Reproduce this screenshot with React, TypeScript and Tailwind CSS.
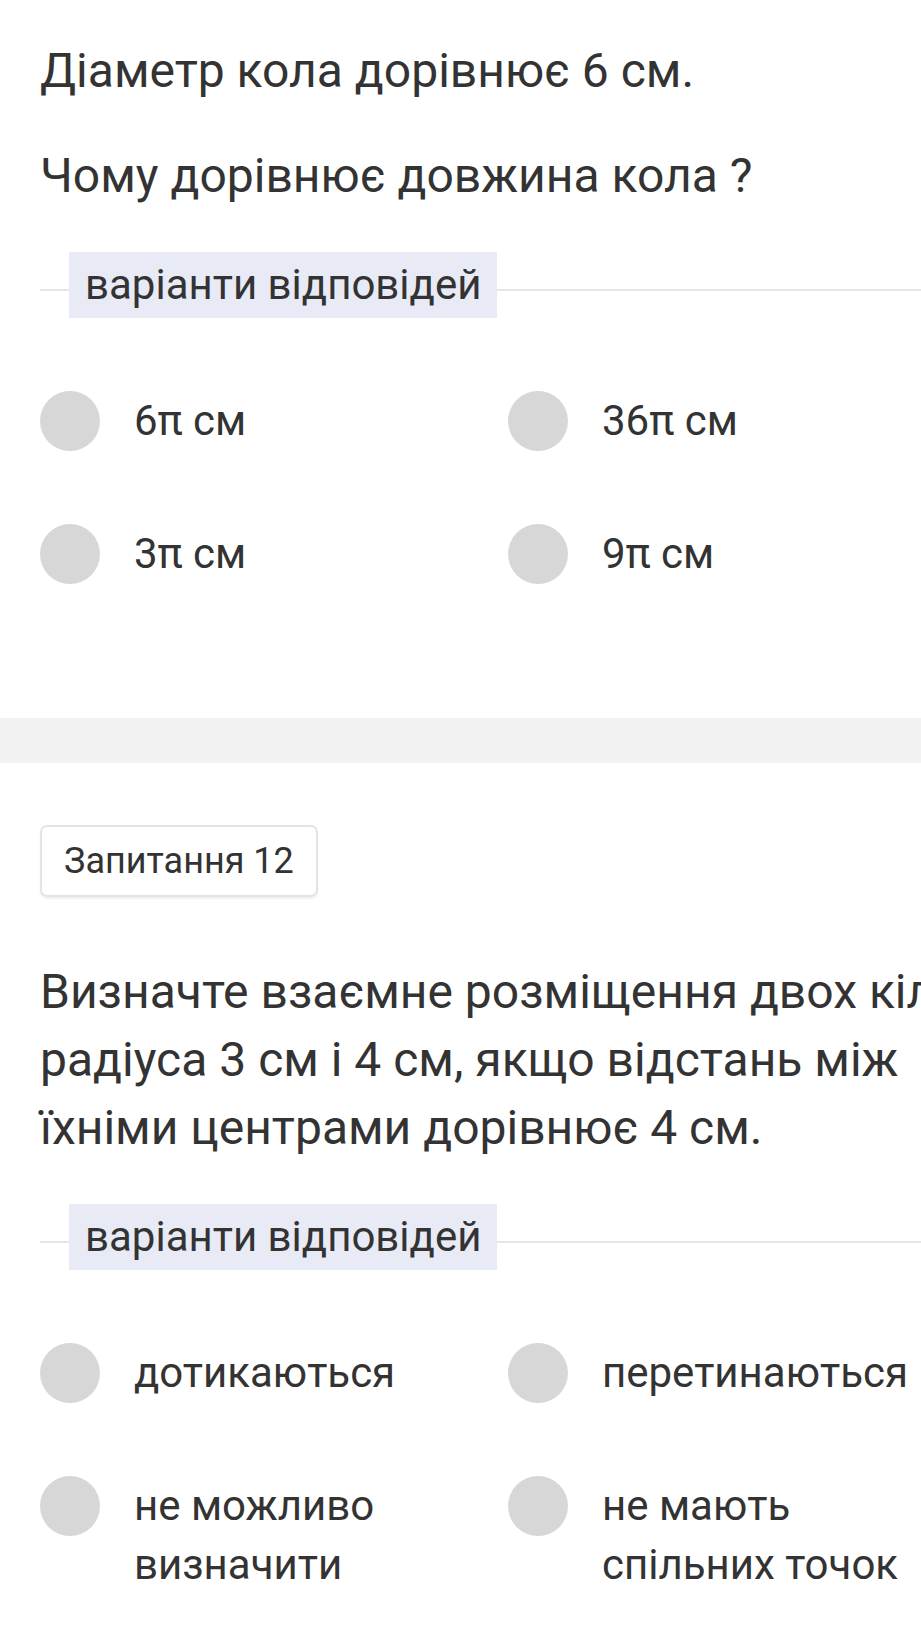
import React from 'react';

type Option = { id: string; text: string };

const Radio: React.FC<{ option: Option }> = ({ option }) => (
    <div className="flex items-start gap-[34px]">
        <div className="w-[60px] h-[60px] shrink-0 rounded-full bg-[#d7d7d7]" />
        <span className="max-w-[335px] text-[42px] leading-[59px] text-[#333333]">{option.text}</span>
    </div>
);

const AnswersLabel: React.FC = () => (
    <div className="flex items-center">
        <div className="w-[29px] h-[2px] mt-[10px] bg-[#e6e6e6]" />
        <div className="bg-[#e8eaf5] px-4 h-[66px] text-[42px] leading-[66px] text-[#333333]">
            варіанти відповідей
        </div>
        <div className="flex-1 h-[2px] mt-[10px] bg-[#e6e6e6]" />
    </div>
);

const OptionsGrid: React.FC<{ options: Option[] }> = ({ options }) => (
    <div className="grid grid-cols-[468px_1fr] gap-y-[73px] mt-[73px]">
        {options.map((o) => (
            <Radio key={o.id} option={o} />
        ))}
    </div>
);

export default function App() {
    const first: Option[] = [
        { id: 'a', text: '6π см' },
        { id: 'b', text: '36π см' },
        { id: 'c', text: '3π см' },
        { id: 'd', text: '9π см' },
    ];
    const second: Option[] = [
        { id: 'a', text: 'дотикаються' },
        { id: 'b', text: 'перетинаються' },
        { id: 'c', text: 'не можливо визначити' },
        { id: 'd', text: 'не мають спільних точок' },
    ];

    return (
        <div className="w-[921px] min-h-[1647px] overflow-hidden bg-white font-['Roboto',sans-serif] text-[#333333]">
            <div className="w-[1020px]">
                {/* Question 11 */}
                <div className="px-[40px] pt-[37px] pb-[134px]">
                    <p className="text-[48px] leading-[68px]">Діаметр кола дорівнює 6 см.</p>
                    <p className="text-[48px] leading-[68px] mt-[37px]">Чому дорівнює довжина кола ?</p>
                    <div className="mt-[42px] -mr-[40px]">
                        <AnswersLabel />
                    </div>
                    <OptionsGrid options={first} />
                </div>

                <div className="h-[45px] bg-[#f2f2f2]" />

                {/* Question 12 */}
                <div className="px-[40px] pt-[62px] pb-[60px]">
                    <div className="inline-flex items-center h-[72px] px-[22px] rounded-[7px] border-2 border-[#e4e4e4] shadow-[0_2px_2px_rgba(0,0,0,0.06)] text-[36px]">
                        Запитання 12
                    </div>
                    <p className="text-[48px] leading-[68px] mt-[61px]">
                        Визначте взаємне розміщення двох кіл радіуса 3 см і 4 см, якщо відстань між їхніми центрами дорівнює 4 см.
                    </p>
                    <div className="mt-[42px] -mr-[40px]">
                        <AnswersLabel />
                    </div>
                    <OptionsGrid options={second} />
                </div>
            </div>
        </div>
    );
}
